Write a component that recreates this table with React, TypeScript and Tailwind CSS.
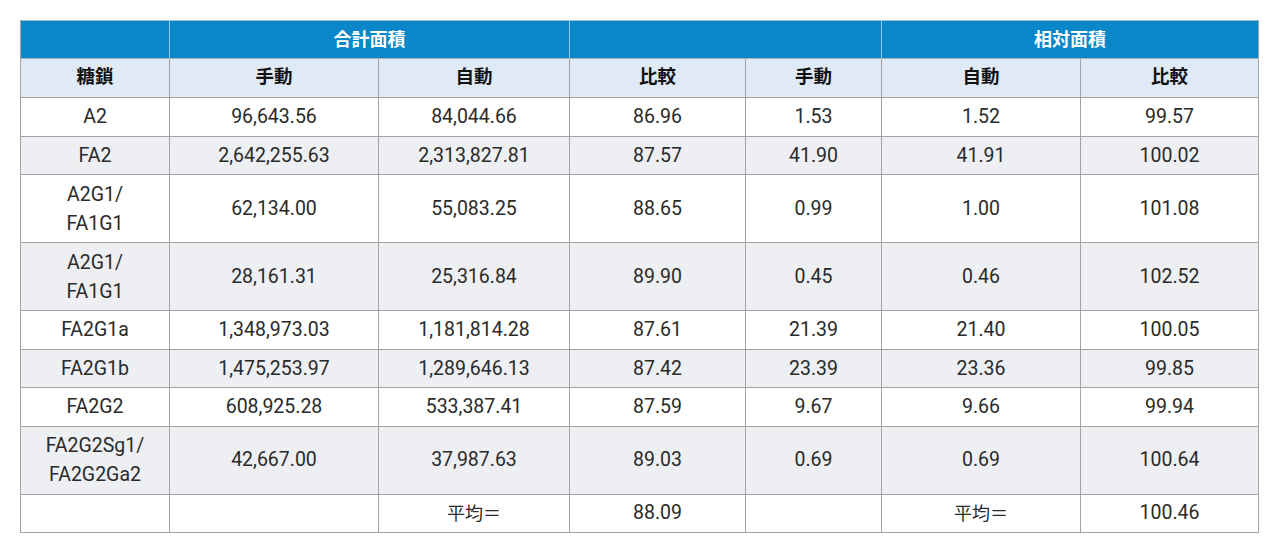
const font = { fontFamily: 'Roboto, "Noto Sans CJK JP", sans-serif' };

type Row = { name: string[]; cells: string[]; tall?: boolean };

const rows: Row[] = [
  { name: ['A2'], cells: ['96,643.56', '84,044.66', '86.96', '1.53', '1.52', '99.57'] },
  { name: ['FA2'], cells: ['2,642,255.63', '2,313,827.81', '87.57', '41.90', '41.91', '100.02'] },
  { name: ['A2G1/', 'FA1G1'], cells: ['62,134.00', '55,083.25', '88.65', '0.99', '1.00', '101.08'], tall: true },
  { name: ['A2G1/', 'FA1G1'], cells: ['28,161.31', '25,316.84', '89.90', '0.45', '0.46', '102.52'], tall: true },
  { name: ['FA2G1a'], cells: ['1,348,973.03', '1,181,814.28', '87.61', '21.39', '21.40', '100.05'] },
  { name: ['FA2G1b'], cells: ['1,475,253.97', '1,289,646.13', '87.42', '23.39', '23.36', '99.85'] },
  { name: ['FA2G2'], cells: ['608,925.28', '533,387.41', '87.59', '9.67', '9.66', '99.94'] },
  { name: ['FA2G2Sg1/', 'FA2G2Ga2'], cells: ['42,667.00', '37,987.63', '89.03', '0.69', '0.69', '100.64'], tall: true },
];

const cell = 'border border-[#a3a3a3] text-center align-middle p-0';

export default function App() {
  return (
    <div className="w-[1280px] h-[554px] bg-white pt-5 pl-5" style={font}>
      <table className="border-collapse table-fixed w-[1238px] text-[19.5px] text-[#2a2a2a]">
        <colgroup>
          <col className="w-[149px]" />
          <col className="w-[209px]" />
          <col className="w-[191px]" />
          <col className="w-[176px]" />
          <col className="w-[136px]" />
          <col className="w-[199px]" />
          <col className="w-[178px]" />
        </colgroup>
        <thead>
          <tr className="h-[38px] bg-[#0987c8] text-white font-bold text-[18px]">
            <th className="border-y border-[#9fb8c8] border-r border-r-[#8fd4ee] border-l border-l-[#a3a3a3]"></th>
            <th colSpan={2} className="border-y border-[#9fb8c8] border-r border-r-[#8fd4ee]">合計面積</th>
            <th colSpan={2} className="border-y border-[#9fb8c8] border-r border-r-[#8fd4ee]"></th>
            <th colSpan={2} className="border-y border-[#9fb8c8] border-r border-r-[#a3a3a3]">相対面積</th>
          </tr>
          <tr className="h-[39px] bg-[#dfeaf6] font-bold text-[18.5px] text-[#111]">
            {['糖鎖', '手動', '自動', '比較', '手動', '自動', '比較'].map((h, i) => (
              <th key={i} className={cell}>{h}</th>
            ))}
          </tr>
        </thead>
        <tbody>
          {rows.map((r, i) => (
            <tr key={i} className={`${r.tall ? 'h-[68px]' : 'h-[38.5px]'} ${i % 2 ? 'bg-[#eeeff3]' : 'bg-white'}`}>
              <td className={`${cell} leading-[29px]`}>
                {r.name.map((n, j) => (
                  <div key={j}>{n}</div>
                ))}
              </td>
              {r.cells.map((c, j) => (
                <td key={j} className={cell}>{c}</td>
              ))}
            </tr>
          ))}
          <tr className="h-[38px] bg-white">
            <td className={cell}></td>
            <td className={cell}></td>
            <td className={`${cell} text-[18px]`}>平均＝</td>
            <td className={cell}>88.09</td>
            <td className={cell}></td>
            <td className={`${cell} text-[18px]`}>平均＝</td>
            <td className={cell}>100.46</td>
          </tr>
        </tbody>
      </table>
    </div>
  );
}
